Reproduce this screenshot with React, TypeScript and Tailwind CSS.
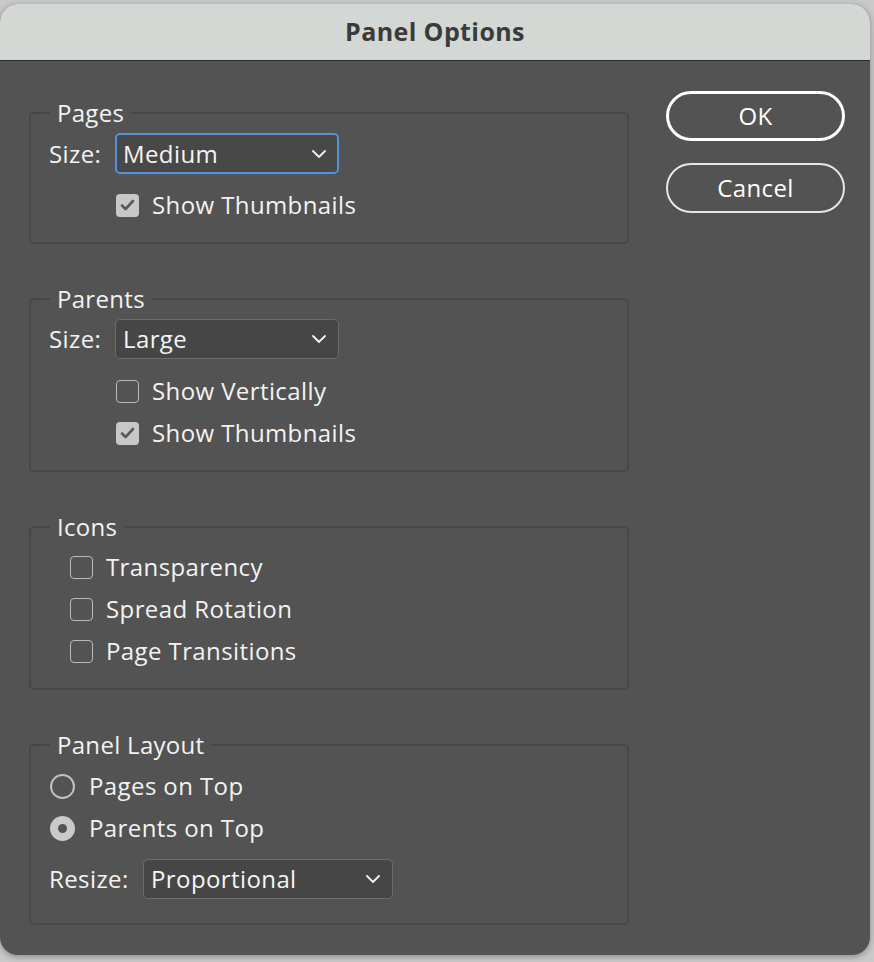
import React from "react";

const font = { fontFamily: '"Open Sans", "Noto Sans", sans-serif' };

function Chevron() {
  return (
    <svg width="14" height="8" viewBox="0 0 14 8" fill="none" className="shrink-0">
      <polyline points="1,1 7,7 13,1" stroke="#f2f2f2" strokeWidth="1.8" strokeLinecap="round" strokeLinejoin="round" />
    </svg>
  );
}

function Select({ value, width, focused }: { value: string; width: string; focused?: boolean }) {
  return (
    <div
      className={
        focused
          ? `${width} h-[41px] flex items-center justify-between pl-[6px] pr-[11px] rounded-[5px] border-2 border-[#4f93de] bg-[#484848]`
          : `${width} h-[40px] flex items-center justify-between pl-[7px] pr-[12px] rounded-[5px] border-[1.5px] border-[#6c6c6c] bg-[#464646]`
      }
    >
      <span className="text-[24px] tracking-[0.4px] text-[#f4f4f4] leading-none">{value}</span>
      <Chevron />
    </div>
  );
}

function Checkbox({ checked, label }: { checked?: boolean; label: string }) {
  return (
    <div className="h-[32px] flex items-center gap-[13px]">
      {checked ? (
        <span className="w-[23px] h-[23px] rounded-[4px] bg-[#c8c8c8] flex items-center justify-center">
          <svg width="15" height="12" viewBox="0 0 15 12" fill="none">
            <polyline points="2,6.5 5.5,10 13,2" stroke="#5a5a5a" strokeWidth="2.6" strokeLinecap="round" strokeLinejoin="round" />
          </svg>
        </span>
      ) : (
        <span className="w-[23px] h-[23px] rounded-[4px] border-[1.5px] border-[#b9b9b9]" />
      )}
      <span className="text-[24px] tracking-[0.4px] text-[#f2f2f2] leading-none">{label}</span>
    </div>
  );
}

function Radio({ checked, label }: { checked?: boolean; label: string }) {
  return (
    <div className="h-[32px] flex items-center gap-[14px]">
      {checked ? (
        <span className="w-[25px] h-[25px] rounded-full bg-[#cacaca] flex items-center justify-center">
          <span className="w-[9px] h-[9px] rounded-full bg-[#535353]" />
        </span>
      ) : (
        <span className="w-[25px] h-[25px] rounded-full border-2 border-[#c2c2c2]" />
      )}
      <span className="text-[24px] tracking-[0.4px] text-[#f2f2f2] leading-none">{label}</span>
    </div>
  );
}

function Group({ title, className, children }: { title: string; className: string; children: React.ReactNode }) {
  return (
    <fieldset className={`border-2 border-[#474747] rounded-[5px] pl-[18px] ${className}`}>
      <legend className="ml-[1px] px-[7px] text-[24px] tracking-[0.3px] leading-[28px] text-[#f2f2f2]">{title}</legend>
      {children}
    </fieldset>
  );
}

export default function App() {
  return (
    <div className="w-[874px] h-[962px] bg-[#c9c9c9] pt-[4px] overflow-hidden" style={font}>
      <div className="w-[870px] h-[951px] rounded-[18px] overflow-hidden bg-[#535353] flex flex-col shadow-[0_2px_6px_rgba(0,0,0,0.3)]">
        <div className="h-[57px] shrink-0 bg-[#d3d8d5] border-b border-[#2b2b2b] flex items-center justify-center">
          <span className="text-[25px] tracking-[0.4px] font-bold text-[#3b3b3b]">Panel Options</span>
        </div>

        <div className="flex">
          <div className="pl-[29px] w-[629px] shrink-0 flex flex-col">
            <Group title="Pages" className="mt-[38px] pt-[6px] pb-[21px]">
              <div className="flex items-center">
                <span className="w-[66px] text-[24px] tracking-[0.4px] text-[#f2f2f2]">Size:</span>
                <Select value="Medium" width="w-[224px]" focused />
              </div>
              <div className="mt-[15px] ml-[67px]">
                <Checkbox checked label="Show Thumbnails" />
              </div>
            </Group>

            <Group title="Parents" className="mt-[41px] pt-[6px] pb-[21px]">
              <div className="flex items-center">
                <span className="w-[66px] text-[24px] tracking-[0.4px] text-[#f2f2f2]">Size:</span>
                <Select value="Large" width="w-[224px]" />
              </div>
              <div className="mt-[16px] ml-[67px] flex flex-col gap-[10px]">
                <Checkbox label="Show Vertically" />
                <Checkbox checked label="Show Thumbnails" />
              </div>
            </Group>

            <Group title="Icons" className="mt-[41px] pt-[10px] pb-[21px]">
              <div className="ml-[21px] flex flex-col gap-[10px]">
                <Checkbox label="Transparency" />
                <Checkbox label="Spread Rotation" />
                <Checkbox label="Page Transitions" />
              </div>
            </Group>

            <Group title="Panel Layout" className="mt-[41px] pt-[11px] pb-[24px]">
              <div className="ml-[1px] flex flex-col gap-[10px]">
                <Radio label="Pages on Top" />
                <Radio checked label="Parents on Top" />
              </div>
              <div className="mt-[15px] flex items-center">
                <span className="w-[94px] text-[24px] tracking-[0.4px] text-[#f2f2f2]">Resize:</span>
                <Select value="Proportional" width="w-[250px]" />
              </div>
            </Group>
          </div>

          <div className="ml-[37px] pt-[30px] flex flex-col gap-[22px]">
            <button className="w-[179px] h-[50px] rounded-full border-[3px] border-white text-[24px] tracking-[0.4px] text-white">OK</button>
            <button className="w-[179px] h-[50px] rounded-full border-2 border-[#e6e6e6] text-[24px] tracking-[0.4px] text-white">Cancel</button>
          </div>
        </div>
      </div>
    </div>
  );
}
